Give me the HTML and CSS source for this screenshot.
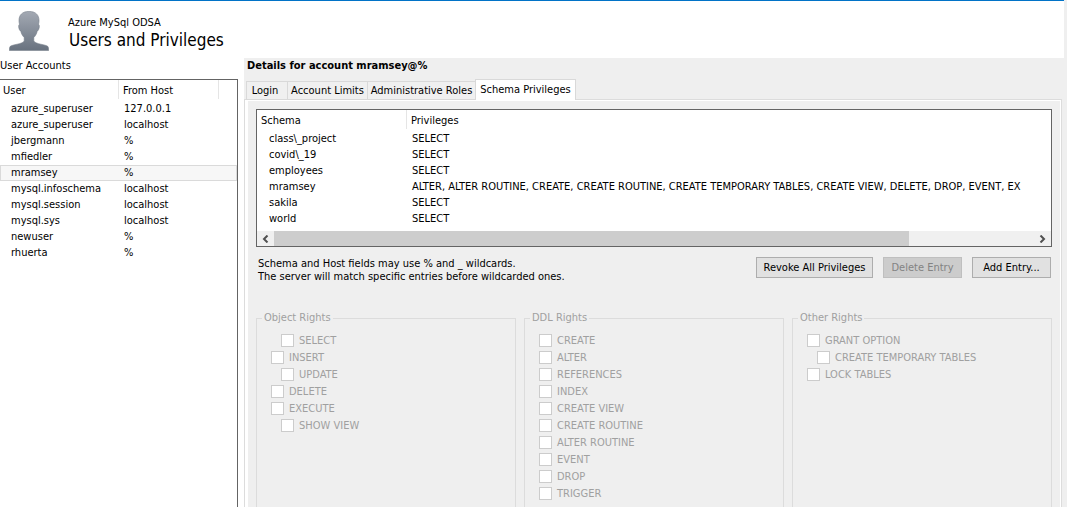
FILE: index.html
```html
<!DOCTYPE html>
<html lang="en">
<head>
<meta charset="utf-8">
<title>Users and Privileges</title>
<link rel="stylesheet" href="styles.css">
</head>
<body>
<div class="window">
  <header class="header">
    <svg class="avatar" viewBox="0 0 40 40" aria-hidden="true">
      <defs><linearGradient id="shade" x1="0" y1="0" x2="0" y2="1"><stop offset="0" stop-color="#a3a9b3"/><stop offset="1" stop-color="#68727f"/></linearGradient></defs>
      <path fill="url(#shade)" stroke="#747c88" stroke-width=".6" d="M20 .4C13.500 .4 10 3.800 10 9.500C10 11 10.200 12.200 10.500 13.200C9 13.800 9.600 19 11.800 20.300C12.500 23.500 14 25.300 15.200 26.400V30C13 33.500 3.500 33.200 1 35.600Q.4 36.500 .4 39.600H39.600Q39.600 36.500 39 35.600C36.500 33.200 27 33.500 24.800 30V26.400C26 25.300 27.500 23.500 28.200 20.300C30.400 19 31 13.800 29.500 13.200C29.800 12.200 30 11 30 9.500C30 3.800 26.500 .4 20 .4Z"/>
    </svg>
    <div class="heading">
      <div class="connection">Azure MySql ODSA</div>
      <h1 class="title">Users and Privileges</h1>
    </div>
  </header>
  <div class="content">
    <section class="accounts">
      <h2 class="caption">User Accounts</h2>
      <div class="list">
        <table class="grid">
          <colgroup><col class="col-user"><col class="col-host"><col></colgroup>
          <thead><tr><th>User</th><th>From Host</th><th></th></tr></thead>
          <tbody>
            <tr><td>azure_superuser</td><td>127.0.0.1</td><td></td></tr>
            <tr><td>azure_superuser</td><td>localhost</td><td></td></tr>
            <tr><td>jbergmann</td><td>%</td><td></td></tr>
            <tr><td>mfiedler</td><td>%</td><td></td></tr>
            <tr class="selected"><td>mramsey</td><td>%</td><td></td></tr>
            <tr><td>mysql.infoschema</td><td>localhost</td><td></td></tr>
            <tr><td>mysql.session</td><td>localhost</td><td></td></tr>
            <tr><td>mysql.sys</td><td>localhost</td><td></td></tr>
            <tr><td>newuser</td><td>%</td><td></td></tr>
            <tr><td>rhuerta</td><td>%</td><td></td></tr>
          </tbody>
        </table>
      </div>
    </section>
    <section class="details">
      <h2 class="details-title">Details for account mramsey@%</h2>
      <div class="tabs" role="tablist">
        <button class="tab login" role="tab">Login</button>
        <button class="tab limits" role="tab">Account Limits</button>
        <button class="tab roles" role="tab">Administrative Roles</button>
        <button class="tab active" role="tab" aria-selected="true">Schema Privileges</button>
      </div>
      <div class="pane" role="tabpanel">
        <div class="schemas">
          <table class="grid">
            <colgroup><col class="col-schema"><col></colgroup>
            <thead><tr><th>Schema</th><th>Privileges</th></tr></thead>
            <tbody>
              <tr><td>class\_project</td><td>SELECT</td></tr>
              <tr><td>covid\_19</td><td>SELECT</td></tr>
              <tr><td>employees</td><td>SELECT</td></tr>
              <tr><td>mramsey</td><td>ALTER, ALTER ROUTINE, CREATE, CREATE ROUTINE, CREATE TEMPORARY TABLES, CREATE VIEW, DELETE, DROP, EVENT, EX</td></tr>
              <tr><td>sakila</td><td>SELECT</td></tr>
              <tr><td>world</td><td>SELECT</td></tr>
            </tbody>
          </table>
          <div class="scrollbar">
            <button class="arrow" aria-label="Scroll left"><svg viewBox="0 0 7 8"><path d="M5.500 .5L2 4L5.500 7.500"/></svg></button>
            <div class="track"><div class="thumb"></div></div>
            <button class="arrow" aria-label="Scroll right"><svg viewBox="0 0 7 8"><path d="M1.500 .5L5 4L1.500 7.500"/></svg></button>
          </div>
        </div>
        <div class="actions">
          <p class="hint">Schema and Host fields may use % and _ wildcards.<br>The server will match specific entries before wildcarded ones.</p>
          <button class="button wide">Revoke All Privileges</button>
          <button class="button" disabled>Delete Entry</button>
          <button class="button">Add Entry...</button>
        </div>
        <div class="rights">
          <fieldset class="group" disabled>
            <legend>Object Rights</legend>
            <label class="check indent"><input type="checkbox">SELECT</label>
            <label class="check"><input type="checkbox">INSERT</label>
            <label class="check indent"><input type="checkbox">UPDATE</label>
            <label class="check"><input type="checkbox">DELETE</label>
            <label class="check"><input type="checkbox">EXECUTE</label>
            <label class="check indent"><input type="checkbox">SHOW VIEW</label>
          </fieldset>
          <fieldset class="group" disabled>
            <legend>DDL Rights</legend>
            <label class="check"><input type="checkbox">CREATE</label>
            <label class="check"><input type="checkbox">ALTER</label>
            <label class="check"><input type="checkbox">REFERENCES</label>
            <label class="check"><input type="checkbox">INDEX</label>
            <label class="check"><input type="checkbox">CREATE VIEW</label>
            <label class="check"><input type="checkbox">CREATE ROUTINE</label>
            <label class="check"><input type="checkbox">ALTER ROUTINE</label>
            <label class="check"><input type="checkbox">EVENT</label>
            <label class="check"><input type="checkbox">DROP</label>
            <label class="check"><input type="checkbox">TRIGGER</label>
          </fieldset>
          <fieldset class="group" disabled>
            <legend>Other Rights</legend>
            <label class="check"><input type="checkbox">GRANT OPTION</label>
            <label class="check indent"><input type="checkbox">CREATE TEMPORARY TABLES</label>
            <label class="check"><input type="checkbox">LOCK TABLES</label>
          </fieldset>
        </div>
      </div>
    </section>
  </div>
</div>
</body>
</html>
```
FILE: styles.css
```css
* { box-sizing: border-box; }
body {
  margin: 0;
  height: 100vh;
  overflow: hidden;
  background: #efefef;
  color: #000;
  font: 11px/14px "DejaVu Sans Condensed", "DejaVu Sans", sans-serif;
}
button { font: inherit; color: inherit; }
h1, h2, p { margin: 0; font-weight: normal; }

.window {
  display: flex;
  flex-direction: column;
  height: 100%;
  margin-right: 3px;
  background: #fff;
  border-top: 1px solid #0173c7;
}
.header { display: flex; height: 57px; padding: 10px 9px 0; gap: 19px; }
.avatar { width: 40px; height: 40px; }
.heading { padding-top: 5px; }
.connection { line-height: 14px; }
.title { padding-left: 1px; font-size: 17px; line-height: 20px; }

.content { flex: 1; display: flex; min-height: 0; gap: 6px; }
.accounts { width: 238px; display: flex; flex-direction: column; }
.caption { font-size: 11px; line-height: 16px; height: 21px; }
.list { flex: 1; border: solid #646464; border-width: 1px 1px 0 0; }

.grid { width: 100%; table-layout: fixed; border-collapse: collapse; }
.grid th, .grid td { padding: 0; text-align: left; font-weight: normal; white-space: nowrap; overflow: hidden; }
.grid th { height: 21px; padding-left: 5px; line-height: 15px; background: linear-gradient(#e5e5e5, #e5e5e5) left top / 1px 19px no-repeat; }
.grid th:first-child { padding-left: 4px; background: none; }
.grid td { height: 16px; padding-left: 6px; line-height: 14px; }
.grid td:first-child { padding-left: 12px; }
.list th:first-child { padding-left: 3px; }
.list td:first-child { padding-left: 11px; }
.selected { background: #f7f7f7; outline: 1px solid #dadada; outline-offset: -1px; }
.col-user { width: 118px; }
.col-host { width: 100px; }
.col-schema { width: 149px; }

.details { flex: 1; min-width: 0; display: flex; flex-direction: column; background: #efefef; padding-right: 2px; }
.details-title { padding: 0 3px; height: 21px; font-size: 11px; line-height: 16px; font-weight: bold; }
.tabs { display: flex; align-items: flex-end; height: 21px; padding-left: 2px; margin-bottom: -1px; z-index: 1; }
.tab { height: 19px; padding: 0; border: 1px solid #d9d9d9; border-right-width: 0; background: #f0f0f0; white-space: nowrap; }
.tab.login { width: 41px; padding-right: 4px; }
.tab.limits { width: 80px; }
.tab.roles { width: 108px; }
.tab.active { width: 101px; height: 21px; border-width: 1px 1px 0; background: #fff; }

.pane {
  flex: 1;
  display: flex;
  flex-direction: column;
  min-height: 0;
  padding: 9px 9px 0 11px;
  border: 1px solid #dcdcdc;
  border-bottom: 0;
  box-shadow: inset 3px 1px #fff, inset -1px 0 #fff;
}
.schemas { flex: none; border: 1px solid #646464; background: #fff; }
.scrollbar { display: flex; height: 15px; margin-top: 4px; background: #f0f0f0; }
.arrow { width: 17px; padding: 0; border: 0; background: none; display: grid; place-items: center; }
.arrow svg { width: 7px; height: 8px; fill: none; stroke: #505050; stroke-width: 2; }
.track { flex: 1; display: flex; }
.thumb { width: 83.5%; background: #cdcdcd; }

.actions { display: flex; gap: 10px; padding: 10px 1px 0 2px; height: 64px; align-items: flex-start; }
.hint { flex: 1; line-height: 13px; }
.button { width: 79px; height: 21px; padding: 0; border: 1px solid #adadad; background: #e1e1e1; white-space: nowrap; }
.button.wide { width: 117px; }
.button:disabled { background: #ccc; border-color: #bfbfbf; color: #838383; }

.rights { flex: 1; min-height: 0; display: grid; grid-template-columns: repeat(3, minmax(0, 1fr)); gap: 8px; }
.group { margin: 0; padding: 7px 14px 0; border: 1px solid #dcdcdc; border-bottom: 0; color: #a0a0a0; min-width: 0; }
.group legend { margin-left: -9px; padding: 0 2px; line-height: 14px; }
.check { display: flex; align-items: center; gap: 5px; height: 17px; white-space: nowrap; }
.check.indent { padding-left: 10px; }
.check input { appearance: none; width: 13px; height: 13px; margin: 0; border: 1px solid #ccc; background: #fff; }
```
